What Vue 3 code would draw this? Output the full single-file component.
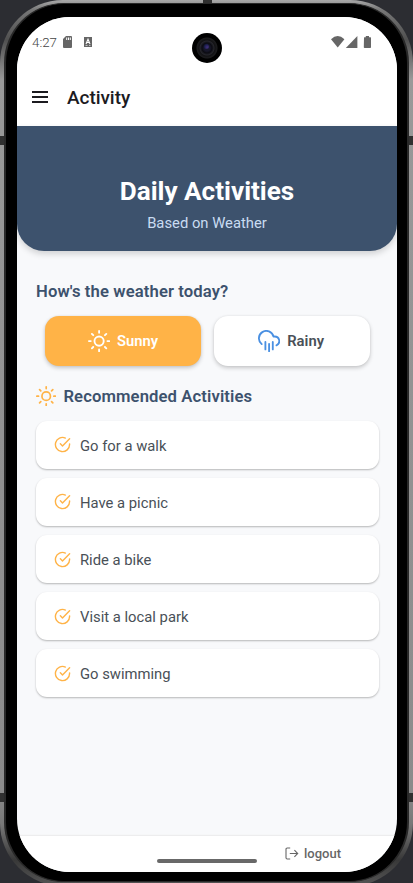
<script setup>
const activities = [
  'Go for a walk',
  'Have a picnic',
  'Ride a bike',
  'Visit a local park',
  'Go swimming',
]
</script>

<template>
  <div class="backdrop">
    <div class="frame">
      <i class="seam seam-top"></i>
      <i class="seam seam-lt"></i>
      <i class="seam seam-rt"></i>
      <i class="seam seam-lb"></i>
      <i class="seam seam-rb"></i>
      <div class="bezel">
        <div class="screen">
          <div class="camera"><i></i></div>

          <div class="status">
            <span class="time">4:27</span>
            <svg class="sd" viewBox="0 0 9 12"><path fill="#666" fill-rule="evenodd" d="M3 0H8Q9 0 9 1V11Q9 12 8 12H1Q0 12 0 11V3ZM3.2 1.5V4H4.2V1.5ZM5 1.5V4H6V1.5ZM6.8 1.5V4H7.8V1.5Z" /></svg>
            <svg class="kb" viewBox="0 0 8 10"><path fill="#666" d="M0 0H8V10H0Z" /><path d="M2 7 4 2.2 6 7M2.8 5.5H5.2" fill="none" stroke="#fff" stroke-width="1.1" /><path d="M1.5 8.5H3.5M5 8.5H6.5" stroke="#fff" stroke-width=".6" /></svg>
            <span class="grow"></span>
            <svg class="signals" viewBox="0 0 41 12">
              <g fill="#666">
                <path d="M0 3.2Q6.7-3 13.4 3.2L6.7 11.5Z" />
                <path d="M26.4 0V12H14.8Z" />
                <path d="M33 1.6Q33 1.2 33.5 1.2H34.8V0H38V1.2H39.4Q40 1.2 40 1.8V11.2Q40 12 39.2 12H33.6Q32.8 12 32.8 11.2Z" />
              </g>
            </svg>
          </div>

          <div class="navbar">
            <svg class="menu" viewBox="0 0 16 12"><path d="M0 1H16M0 6H16M0 11H16" stroke="#1c1b1f" stroke-width="1.9" /></svg>
            <span>Activity</span>
          </div>

          <div class="banner">
            <h1>Daily Activities</h1>
            <p>Based on Weather</p>
          </div>

          <main>
            <h2>How's the weather today?</h2>
            <div class="choices">
              <button class="choice sunny">
                <svg class="ico" viewBox="0 0 24 24"><circle cx="12" cy="12" r="5" /><path d="M12 1v2M12 21v2M4.22 4.22l1.42 1.42M18.36 18.36l1.42 1.42M1 12h2M21 12h2M4.22 19.78l1.42-1.42M18.36 5.64l1.42-1.42" /></svg>
                <span>Sunny</span>
              </button>
              <button class="choice rainy">
                <svg class="ico rain" viewBox="0 0 24 24"><path d="M16 13v8M8 13v8M12 15v8M20 16.58A5 5 0 0 0 18 7h-1.26A8 8 0 1 0 4 15.25" /></svg>
                <span>Rainy</span>
              </button>
            </div>
            <div class="subhead">
              <svg class="ico" viewBox="0 0 24 24"><circle cx="12" cy="12" r="5" /><path d="M12 1v2M12 21v2M4.22 4.22l1.42 1.42M18.36 18.36l1.42 1.42M1 12h2M21 12h2M4.22 19.78l1.42-1.42M18.36 5.64l1.42-1.42" /></svg>
              <h2>Recommended Activities</h2>
            </div>
            <ul>
              <li v-for="item in activities" :key="item">
                <svg class="ico" viewBox="0 0 24 24"><path d="M22 11.08V12a10 10 0 1 1-5.93-9.14M22 4 12 14.01l-3-3" /></svg>
                <span>{{ item }}</span>
              </li>
            </ul>
          </main>

          <footer>
            <div class="logout">
              <svg viewBox="0 0 14 13"><path d="M5.2 1H2.2Q1 1 1 2.2V10.8Q1 12 2.2 12H5.2M4.8 6.5H12.6M9.4 3.2 12.7 6.5 9.4 9.8" /></svg>
              <span>logout</span>
            </div>
            <i class="home"></i>
          </footer>
        </div>
      </div>
    </div>
  </div>
</template>

<style>
body { margin: 0; }
</style>

<style scoped>
* { box-sizing: border-box; }
.backdrop {
  width: 413px;
  height: 883px;
  overflow: hidden;
  background: #2c2d32;
  font-family: Roboto, "Liberation Sans", sans-serif;
}
.frame {
  position: relative;
  width: 413px;
  height: 886px;
  padding: 3px 4px 4px;
  border-radius: 63px;
  background: linear-gradient(#a9a9a9 0, #777 10px, #505050 40px, #999 80px, #8b8b8b 790px, #777 825px, #383838 860px, #555 100%);
}
.seam { position: absolute; background: #303030; width: 5px; height: 9px; }
.seam-top { left: 203px; top: 0; width: 9px; height: 4px; }
.seam-lt { left: 0; top: 136px; }
.seam-rt { right: 0; top: 136px; }
.seam-lb { left: 0; top: 793px; }
.seam-rb { right: 0; top: 793px; }
.bezel {
  position: relative;
  height: 879px;
  padding: 13px 10px 10px 11px;
  border: 1px solid #292929;
  border-width: 1px 2px;
  border-radius: 60px;
  background: #000;
}
.screen {
  position: relative;
  display: flex;
  flex-direction: column;
  width: 380px;
  height: 855px;
  overflow: hidden;
  border-radius: 53px;
  background: #f8f9fb;
}
.camera {
  position: absolute;
  z-index: 2;
  left: 175px;
  top: 16px;
  width: 30px;
  height: 30px;
  border-radius: 50%;
  background: radial-gradient(circle, #17172a 0 3px, #0b0b12 5px, #25252b 7px, #121214 8px, #1c1c1e 10px, #000 11px);
}
.camera i {
  position: absolute;
  left: 12px;
  top: 11px;
  width: 5px;
  height: 5px;
  border-radius: 50%;
  background: radial-gradient(circle at 65% 65%, #46317d, #141b45 70%);
}
.status {
  display: flex;
  align-items: center;
  flex: none;
  height: 50px;
  padding: 0 25px 0 15px;
  background: #fff;
}
.time { width: 31px; font-size: 13.3px; font-weight: 300; color: #444; }
.sd { width: 9px; height: 12px; }
.kb { width: 8px; height: 10px; margin-left: 12px; }
.grow { flex: 1; }
.signals { width: 41px; height: 12px; }
.navbar {
  display: flex;
  align-items: center;
  flex: none;
  height: 59px;
  padding: 0 15px;
  gap: 19px;
  background: #fff;
  font-size: 19px;
  font-weight: 500;
  color: #1c1b1f;
}
.navbar span { padding-top: 1px; letter-spacing: -.05px; }
.menu { width: 16px; height: 12px; margin-top: 1px; }
.banner {
  flex: none;
  height: 125px;
  padding-top: 50px;
  border-radius: 0 0 27px 27px;
  background: #3d526d;
  box-shadow: 0 3px 6px rgba(0, 0, 0, .16);
  text-align: center;
}
h1 { margin: 0; font-size: 26.1px; line-height: 31px; font-weight: 700; color: #fff; }
p { margin: 6px 0 0; font-size: 14.8px; line-height: 20px; color: #c9dcf2; }
main { flex: 1; padding: 30px 18px 0 19px; }
h2 { margin: 0; font-size: 16.65px; line-height: 22px; font-weight: 600; letter-spacing: .11px; color: #3d526d; }
.choices { display: flex; gap: 13px; padding: 13px 9px 0; }
.choice {
  display: flex;
  align-items: center;
  justify-content: center;
  gap: 7px;
  width: 156px;
  height: 50px;
  padding: 0;
  border: 0;
  border-radius: 14px;
  background: #fff;
  box-shadow: 0 2px 4px rgba(0, 0, 0, .2), 0 0 2px rgba(0, 0, 0, .08);
  font: 600 14.8px Roboto, "Liberation Sans", sans-serif;
  color: #495057;
}
.rainy { padding-right: 2px; }
.sunny { background: #ffb347; color: #fff; }
.ico {
  flex: none;
  width: 22.2px;
  height: 22.2px;
  fill: none;
  stroke: currentColor;
  stroke-width: 2;
  stroke-linecap: round;
  stroke-linejoin: round;
}
.rain { color: #4a90e2; }
.subhead { display: flex; align-items: center; gap: 7px; margin-top: 20px; height: 22px; color: #ffb347; }
.subhead .ico { width: 20.4px; height: 20.4px; margin-top: -2px; }
ul { display: grid; gap: 9.3px; margin: 13px 0 0; padding: 0; list-style: none; }
li {
  display: flex;
  align-items: center;
  gap: 9px;
  height: 47.8px;
  padding: 2px 18px 0;
  border-radius: 11px;
  background: #fff;
  box-shadow: 0 1px 2px rgba(0, 0, 0, .27);
  color: #495057;
  font-size: 14.8px;
}
li .ico { width: 17px; height: 17px; margin-top: -2px; color: #ffb347; }
footer {
  position: relative;
  flex: none;
  height: 36.5px;
  background: #fff;
  box-shadow: 0 -1px 1px #ededee;
}
.logout {
  display: flex;
  align-items: center;
  gap: 5px;
  height: 36px;
  padding-left: 268px;
  color: #666;
  font-size: 13px;
  font-weight: 500;
}
.logout svg { width: 14px; height: 13px; fill: none; stroke: #666; stroke-width: 1.1; }
.home { position: absolute; left: 140px; top: 23.5px; width: 100px; height: 4px; border-radius: 2px; background: #686868; }
</style>
